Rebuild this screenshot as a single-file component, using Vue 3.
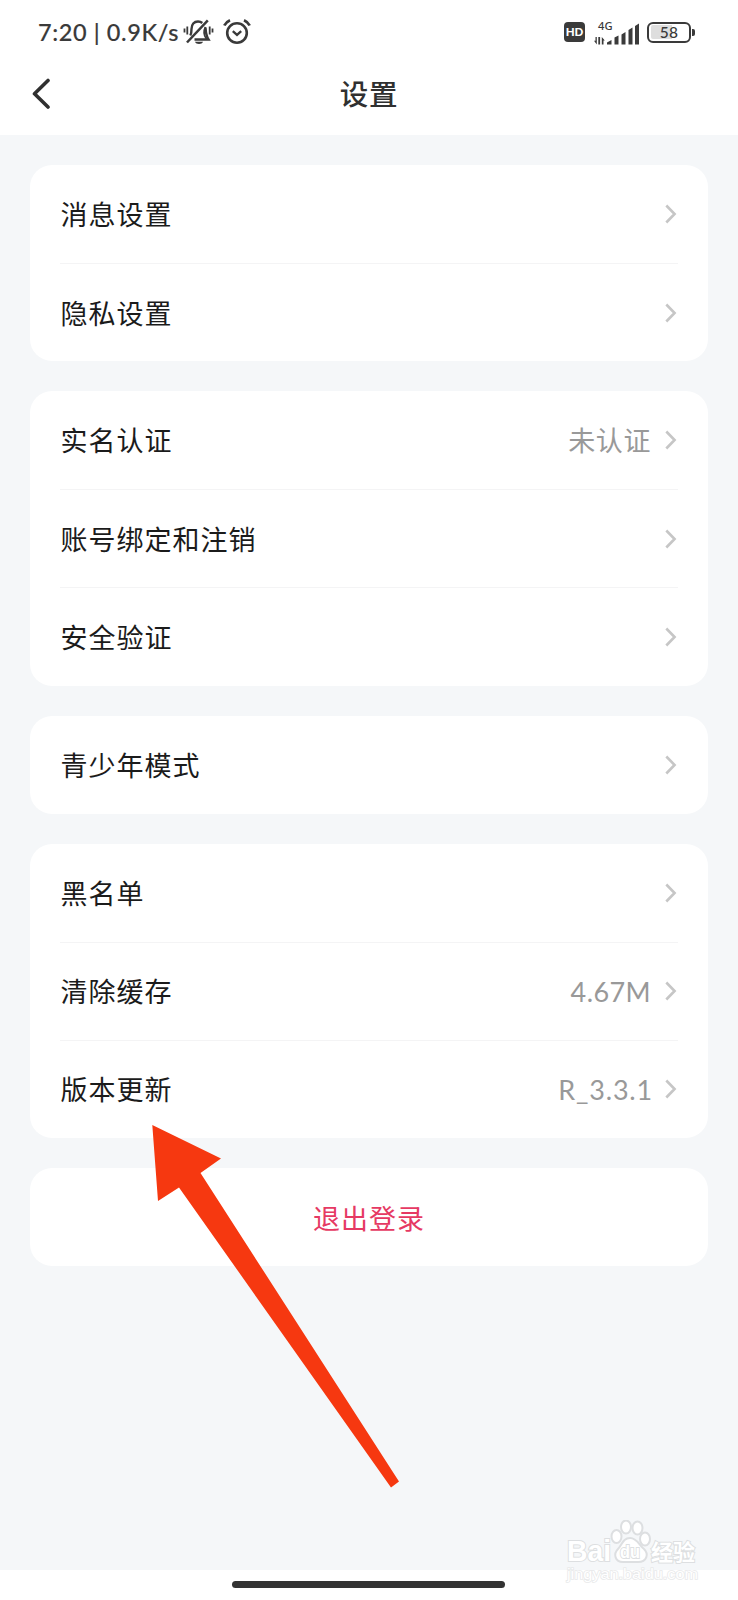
<script setup>
const groups = [
  [{ label: '消息设置' }, { label: '隐私设置' }],
  [{ label: '实名认证', value: '未认证' }, { label: '账号绑定和注销' }, { label: '安全验证' }],
  [{ label: '青少年模式' }],
  [
    { label: '黑名单' },
    { label: '清除缓存', value: '4.67M', kind: 'size' },
    { label: '版本更新', value: 'R_3.3.1', kind: 'version' },
  ],
]
</script>

<template>
  <div class="screen">
    <header class="top">
      <div class="status">
        <span class="clock">7:20 | 0.9K/s</span>
        <svg class="mute" width="32" height="28" viewBox="0 0 32 28" fill="none" stroke="#3a3a3a" stroke-width="2.400">
          <path d="M1.500 9.500v4M4.300 7.500v8M26.700 7.500v8M29.500 9.500v4" stroke-width="1.800" />
          <path d="M7.300 16.500c1.200-2 1.200-4 1.200-6.500 0-4.500 2.500-7.500 6.500-7.500 1.800 0 3.200.5 4.300 1.500" />
          <path d="M24.800 1.300L4 23.500" stroke-width="2.500" />
          <path d="M22.500 8.500c.3 4 .3 8 3 12H11.500" />
          <path d="M22.500 8c-1.800 3.500-2 8 1 12" stroke-width="1.800" />
          <path d="M12 22.700h8c-1 3-7 3-8 0z" fill="#3a3a3a" stroke="none" />
        </svg>
        <svg class="alarm" width="28" height="28" viewBox="0 0 28 28" fill="none" stroke="#3a3a3a" stroke-width="2.600">
          <circle cx="14" cy="15" r="9.800" />
          <path d="M1.300 7.500Q3 4 7 2.300M26.700 7.500Q25 4 21 2.300" stroke-width="2.800" />
          <path d="M9.800 13.200l4.200 3.600 4.200-3.600" stroke-width="2.400" />
        </svg>
        <span class="spacer"></span>
        <span class="hd">HD</span>
        <svg class="signal" width="48" height="28" viewBox="0 0 48 28" fill="#3a3a3a">
          <text x="4" y="9.500" class="net" textLength="14.500" lengthAdjust="spacingAndGlyphs">4G</text>
          <path d="M2.800 17v7.500L0 20.800h1.500V17zM4.300 17h1.800v7.500H4.300zM7.800 24.500V17l3 3.600H9.500v3.900z" />
          <path d="M13 24.500v-2l4.500-2.500v4.500zM20.500 24.500v-7l4-2v9zM27.500 24.500v-10l4-2.500v12.500zM34.500 24.500V10l4-2.500v17zM41 24.500V6L45 3.500v21z" />
        </svg>
        <span class="battery"><span class="level">58</span></span>
        <span class="nub"></span>
      </div>
      <div class="nav">
        <svg class="back" width="20" height="32" viewBox="0 0 20 32" fill="none" stroke="#303030" stroke-width="3.600" stroke-linecap="round" stroke-linejoin="round">
          <path d="M17 2.500L3.500 15.700l13.500 13.300" />
        </svg>
        <h1>设置</h1>
      </div>
    </header>

    <main>
      <section v-for="(rows, i) in groups" :key="i" class="card">
        <div v-for="row in rows" :key="row.label" class="row">
          <span class="label">{{ row.label }}</span>
          <span v-if="row.value" class="value" :class="row.kind">{{ row.value }}</span>
          <svg class="chevron" width="12" height="20" viewBox="0 0 12 20" fill="none" stroke="#c6c6c6" stroke-width="2.600">
            <path d="M1.300 1.500L9.600 10l-8.300 8.500" />
          </svg>
        </div>
      </section>
      <section class="card logout">退出登录</section>
    </main>

    <footer class="home"><span></span></footer>

    <svg class="arrow" width="260" height="380" viewBox="0 0 260 380">
      <path d="M12.300 5L81 38.500 60.500 53 259 361.500 251 367.500 39 67.500 18 81z" fill="#f63810" />
    </svg>

    <svg class="watermark" width="150" height="70" viewBox="0 0 150 70" fill="#fff" stroke="#dddfe1" stroke-width="2">
      <text x="9" y="41" class="bai" textLength="44" lengthAdjust="spacingAndGlyphs">Bai</text>
      <ellipse cx="58.500" cy="16.500" rx="5" ry="6.500" />
      <ellipse cx="68" cy="7" rx="5" ry="6.500" />
      <ellipse cx="79.500" cy="8" rx="5" ry="6.500" />
      <ellipse cx="87" cy="19" rx="5" ry="6.500" />
      <path d="M72 18c-7 0-8 7-12 11-5 5-3 13 5 13h15c9 0 11-8 6-13-5-4-7-11-14-11z" />
      <text x="62" y="38" class="du" textLength="20" lengthAdjust="spacingAndGlyphs">du</text>
      <text x="93" y="40" class="exp" textLength="44" lengthAdjust="spacingAndGlyphs">经验</text>
      <text x="9" y="59" class="url" textLength="131" lengthAdjust="spacingAndGlyphs">jingyan.baidu.com</text>
    </svg>
  </div>
</template>

<style>
body {
  margin: 0;
  overflow: hidden;
}
</style>

<style scoped>
.screen {
  position: relative;
  display: flex;
  flex-direction: column;
  width: 738px;
  height: 1600px;
  overflow: hidden;
  background: #f5f7f9;
  font-family: Lato, "Noto Sans CJK SC", sans-serif;
}
.top {
  flex: none;
  height: 135px;
  background: #fff;
}
.status {
  display: flex;
  align-items: center;
  height: 64px;
  padding: 0 43px 0 38px;
  color: #3a3a3a;
}
.clock {
  width: 145px;
  font-size: 23.5px;
  font-weight: 500;
  letter-spacing: 0.6px;
  white-space: nowrap;
  -webkit-text-stroke: 0.15px #3a3a3a;
}
.mute {
  margin-top: 1px;
}
.alarm {
  margin-left: 8px;
}
.spacer {
  flex: 1;
}
.hd {
  width: 21px;
  height: 20px;
  border-radius: 4px;
  background: #3a3a3a;
  color: #fff;
  font: 900 11.5px/20px Lato, sans-serif;
  text-align: center;
}
.signal {
  margin: 3px 0 0 9px;
  overflow: visible;
}
.net {
  font: 500 11.5px "Noto Sans", sans-serif;
}
.battery {
  box-sizing: border-box;
  width: 44px;
  height: 21px;
  margin-left: 5px;
  padding: 1.500px;
  border: 2.500px solid #3a3a3a;
  border-radius: 6px;
}
.level {
  display: block;
  height: 14px;
  border-radius: 2px;
  background: linear-gradient(90deg, #dedede 58%, #fff 58%);
  font: 500 15.5px/15px Lato, sans-serif;
  letter-spacing: 0.3px;
  text-align: center;
}
.nub {
  width: 3px;
  height: 7px;
  margin-left: 1px;
  border-radius: 0 2px 2px 0;
  background: #3a3a3a;
}
.nav {
  display: grid;
  grid-template-columns: 80px 1fr 80px;
  align-items: center;
  height: 60px;
}
.back {
  margin-left: 31px;
}
h1 {
  margin: -2px 0 0;
  color: #303030;
  font: 500 28.5px/40px "Noto Sans CJK SC", sans-serif;
  letter-spacing: 0.8px;
  text-align: center;
}
main {
  display: flex;
  flex: 1;
  flex-direction: column;
  gap: 30px;
  padding: 29.8px 30px 0;
}
.card {
  border-radius: 22px;
  background: #fff;
}
.row {
  display: flex;
  align-items: center;
  box-sizing: border-box;
  height: 98.15px;
  margin: 0 30px;
}
.row + .row {
  border-top: 1px solid #f4f4f5;
}
.label {
  flex: 1;
  padding: 0 0 1px 0.5px;
  color: #1b1b1b;
  font-size: 27px;
  letter-spacing: 1px;
}
.value {
  padding-bottom: 1px;
  color: #999;
  font-size: 27px;
  letter-spacing: 0.6px;
}
.size {
  padding-bottom: 0;
  letter-spacing: 0.4px;
}
.version {
  margin-right: -2px;
  padding-bottom: 0;
  letter-spacing: 0.8px;
}
.chevron {
  margin: 0 1px 0 14px;
}
.logout {
  box-sizing: border-box;
  height: 98.15px;
  padding-top: 2px;
  color: #e63963;
  font-size: 27px;
  line-height: 98px;
  letter-spacing: 1px;
  text-align: center;
}
.home {
  display: flex;
  justify-content: center;
  flex: none;
  height: 30px;
  background: #fff;
}
.home span {
  width: 273px;
  height: 7px;
  margin: 11px 1px 0 0;
  border-radius: 4px;
  background: #333;
}
.arrow {
  position: absolute;
  top: 1120px;
  left: 140px;
}
.watermark {
  position: absolute;
  top: 1520px;
  left: 558px;
}
.watermark text {
  paint-order: stroke;
}
.bai {
  font: 700 29px "Liberation Sans", sans-serif;
}
.du {
  font: 700 19px "Liberation Sans", sans-serif;
}
.exp {
  font: 700 22px "Noto Sans CJK SC", sans-serif;
}
.url {
  font: 400 15px "Liberation Sans", sans-serif;
  stroke-width: 1.500px;
  stroke: #e8e9ea;
}
</style>
